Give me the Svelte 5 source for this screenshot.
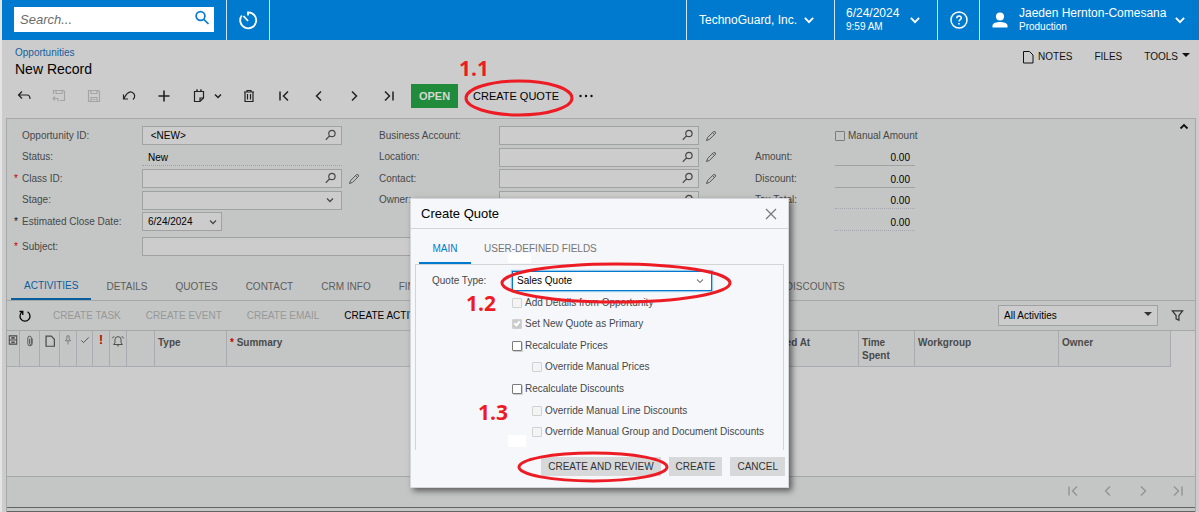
<script>
  let manual = $state(false);
  let rows = [
    { l: 'Opportunity ID', id: 'opp', type: 'search', value: ' <NEW>', l2: 'Business Account', id2: 'account', check: true },
    { l: 'Status', id: 'status', type: 'read', value: 'New', l2: 'Location', id2: 'location', l3: 'Amount', solid: true },
    { l: 'Class ID', id: 'class', star: 'red', type: 'search', value: '', edit: true, l2: 'Contact', id2: 'contact', l3: 'Discount', solid: true },
    { l: 'Stage', id: 'stage', type: 'select', value: '', l2: 'Owner', id2: 'owner', l3: 'Tax Total' },
    { l: 'Estimated Close Date', id: 'close', star: 'dark', type: 'select', short: true, value: '6/24/2024', total: true }
  ];
  let options = [
    { t: 'Add Details from Opportunity', disabled: true },
    { t: 'Set New Quote as Primary', disabled: true, checked: true },
    { t: 'Recalculate Prices' },
    { t: 'Override Manual Prices', disabled: true, sub: true },
    { t: 'Recalculate Discounts' },
    { t: 'Override Manual Line Discounts', disabled: true, sub: true },
    { t: 'Override Manual Group and Document Discounts', disabled: true, sub: true }
  ];
  const paths = {
    back: 'M6 3.5 2.5 7 6 10.5M2.5 7H11q3 0 3 4',
    saveback: 'M2.5 6V2.5h10l1 1v9H9M5 2.5v3h6v-3M2 10.5h5v3M4 8.5l-2 2 2 2',
    save: 'M2.5 2.5h10l1 1v10h-11zM5 2.5v3h6v-3M5 13.5v-4h6v4M6.500 11.500h3',
    undo: 'M2.500 6.500v4.500h4.500M2.800 10.700C5.500 5.500 8.500 3.200 11 4.200 14.300 5.500 14.500 9.500 12 11.500',
    plus: 'M8 2.500v11M2.500 8h11',
    clip: 'M3.500 3.500h9v6.500l-3.500 3.500h-5.500zM5 2.200h2M9 2.200h2M12.500 10H9v3.500',
    trash: 'M3 4h10M6 4V2.500h4V4M4 4v9.500h8V4M6.500 6v5.500M9.500 6v5.500',
    first: 'M4 3.500v9M12 3.500 7.500 8l4.500 4.500',
    prev: 'M10 3.500 5.500 8l4.500 4.500',
    next: 'M6 3.500 10.500 8 6 12.500',
    last: 'M12 3.500v9M4 3.500 8.500 8 4 12.500',
    down: 'M5 6.500l3 3 3-3',
    up: 'M4.500 9.500 8 6l3.500 3.500',
    find: 'M9.500 2.500a3.400 3.400 0 1 1 0 6.800a3.400 3.400 0 0 1 0-6.800M7 8.400 3 12.500',
    pencil: 'M2 14l1.500-4 8-8q3-.5 2.500 2.500l-8 8zM10 3.500l2.500 2.500',
    close: 'M3 3l10 10M13 3l-10 10',
    filter: 'M2.500 3h11L9.500 8v5l-3-1.500V8z',
    refresh: 'M5.500 3.800A5 5 0 1 0 10.500 3.800M5.800 7V3.500H2.500',
    page: 'M3.500 2.500h6l3.500 3.500v8h-9.500z',
    card: 'M3 2.500h10v11H3zM3 8h10M5.500 5.500h5M5.500 11h5M7 4v2M9 4v2M7 10v2M9 10v2',
    attach: 'M10.500 5v6a2.500 2.500 0 0 1-5 0V4.500a2 2 0 0 1 4 0V11a1 1 0 0 1-2 0V5.500',
    pin: 'M6.500 2.500h3v4l2 2.500h-7l2-2.500zM8 9v5',
    tick: 'M3 8.500l3 3L13 4.500',
    bell: 'M3 12h10l-1.500-2V6.500a3.500 3.500 0 0 0-7 0V10zM7 13.500h2M1.500 5l2-2.500M14.500 5l-2-2.500'
  };
</script>

{#snippet icon(name, size = 16, w = 1.2)}
  <svg class="ico" width={size} height={size} viewBox="0 0 16 16" fill="none" stroke="currentColor" stroke-width={w} aria-hidden="true"><path d={paths[name]} /></svg>
{/snippet}

<div class="page">
  <header>
    <div class="search">
      <input type="text" placeholder="Search..." aria-label="Search" />
      <svg width="16" height="16" viewBox="0 0 16 16" fill="none" stroke="#0b7bd0" stroke-width="1.7"><circle cx="6.500" cy="6" r="4.400" /><path d="M9.800 9.300 14.500 14" /></svg>
    </div>
    <button class="hcell timer" aria-label="Recent">
      <svg width="20" height="20" viewBox="0 0 20 20" fill="none" stroke="#fff" stroke-width="1.800"><path d="M10 5.500V2.300A8 8 0 1 1 3.800 5.500M10 11 5.500 6" /></svg>
    </button>
    <button class="hcell company">TechnoGuard, Inc. {@render icon('down', 22, 1.4)}</button>
    <button class="hcell date"><span class="two"><span>6/24/2024</span><small>9:59 AM</small></span>{@render icon('down', 22, 1.4)}</button>
    <button class="hcell help" aria-label="Help">
      <svg width="18" height="18" viewBox="0 0 18 18" fill="none" stroke="#fff" stroke-width="1.500"><circle cx="9" cy="9" r="8" /><path d="M6.700 7.300Q6.900 5 9 5t2.300 2C11.300 8.700 9 8.700 9 10.600M9 12v1.500" /></svg>
    </button>
    <button class="hcell user">
      <svg width="16" height="16" viewBox="0 0 16 16" fill="#fff"><circle cx="8" cy="4.500" r="4" /><path d="M.500 15.500v-2C.500 11 5 10 8 10s7.500 1 7.500 3.500v2z" /></svg>
      <span class="two"><span>Jaeden Hernton-Comesana</span><small>Production</small></span>
      {@render icon('down', 22, 1.4)}
    </button>
  </header>

  <div class="title">
    <div>
      <a href="#opportunities">Opportunities</a>
      <h1>New Record</h1>
    </div>
    <nav>
      <button>{@render icon('page', 16, 1)} NOTES</button>
      <button>FILES</button>
      <button>TOOLS <i class="caret"></i></button>
    </nav>
  </div>

  <div class="toolbar">
    <button aria-label="Back">{@render icon('back')}</button>
    <button class="off" aria-label="Save and close" disabled>{@render icon('saveback')}</button>
    <button class="off" aria-label="Save" disabled>{@render icon('save')}</button>
    <button aria-label="Undo">{@render icon('undo')}</button>
    <button aria-label="Add">{@render icon('plus', 16, 1.6)}</button>
    <button class="wide" aria-label="Clipboard">{@render icon('clip')}{@render icon('down', 16, 1.5)}</button>
    <button aria-label="Delete">{@render icon('trash')}</button>
    <button aria-label="First">{@render icon('first', 16, 1.5)}</button>
    <button aria-label="Previous">{@render icon('prev', 16, 1.5)}</button>
    <button aria-label="Next">{@render icon('next', 16, 1.5)}</button>
    <button aria-label="Last">{@render icon('last', 16, 1.5)}</button>
    <button class="open">OPEN</button>
    <div class="marked">
      <button class="quote">CREATE QUOTE</button>
      <svg class="ring r1" width="110" height="38" viewBox="0 0 110 38"><ellipse cx="55" cy="19" rx="53" ry="17" /></svg>
      <span class="step s1">1.1</span>
    </div>
    <button aria-label="More"><svg width="16" height="16" viewBox="0 0 16 16" fill="#111"><circle cx="2.500" cy="8" r="1.200" /><circle cx="8" cy="8" r="1.200" /><circle cx="13.500" cy="8" r="1.200" /></svg></button>
  </div>

  <main>
    <form>
      <div class="rows">
        {#each rows as r}
          <div class="row">
            <span class="star {r.star}">{r.star ? '*' : ''}</span>
            <label for={r.id}>{r.l}:</label>
            {#if r.type === 'read'}
              <output id={r.id} class="read">{r.value}</output>
            {:else if r.type === 'select'}
              <span class="field" class:short={r.short}>
                <select id={r.id}><option>{r.value}</option></select>{@render icon('down', 16, 1.3)}
              </span>
            {:else}
              <span class="field"><input id={r.id} type="text" value={r.value} />{@render icon('find', 15, 1.3)}</span>
            {/if}
            <span class="edit">{#if r.edit}{@render icon('pencil', 12, 1.2)}{/if}</span>
            {#if r.l2}
              <label for={r.id2}>{r.l2}:</label>
              <span class="field"><input id={r.id2} type="text" />{@render icon('find', 15, 1.3)}</span>
              <span class="edit">{#if r.id2 !== 'owner'}{@render icon('pencil', 12, 1.2)}{/if}</span>
            {:else}
              <span></span><span></span><span></span>
            {/if}
            <span>{r.l3 ? r.l3 + ':' : ''}</span>
            {#if r.check}
              <label class="check"><input type="checkbox" bind:checked={manual} />Manual Amount</label>
            {:else}
              <output class="num" class:solid={r.solid}>0.00</output>
            {/if}
          </div>
        {/each}
      </div>
      <div class="row subject">
        <span class="star red">*</span>
        <label for="subject">Subject:</label>
        <span class="field"><input id="subject" type="text" /></span>
      </div>
      <button type="button" class="collapse" aria-label="Collapse">{@render icon('up', 16, 1.800)}</button>
    </form>

    <div class="tabs">
      <button class="on">ACTIVITIES</button>
      <button>DETAILS</button>
      <button>QUOTES</button>
      <button>CONTACT</button>
      <button>CRM INFO</button>
      <button class="cut">FIN</button>
      <button class="far">DISCOUNTS</button>
    </div>

    <div class="gridbar">
      <button class="refresh" aria-label="Refresh">{@render icon('refresh', 16, 1.3)}</button>
      <button disabled>CREATE TASK</button>
      <button disabled>CREATE EVENT</button>
      <button disabled>CREATE EMAIL</button>
      <button>CREATE ACTIVITY</button>
      <span class="view">
        <select aria-label="View"><option>All Activities</option></select><i class="caret"></i>
      </span>
      <button class="filter" aria-label="Filter">{@render icon('filter', 15, 1.3)}</button>
    </div>

    <div class="grid">
      <table>
        <colgroup>
          <col style="width:13px" /><col style="width:20px" /><col style="width:20px" /><col style="width:17px" /><col style="width:16px" />
          <col style="width:17px" /><col style="width:17px" /><col style="width:28px" /><col style="width:72px" /><col />
          <col style="width:102px" /><col style="width:56px" /><col style="width:144px" /><col style="width:112px" />
        </colgroup>
        <thead>
          <tr>
            <th class="ic">{@render icon('card', 12, 1.4)}</th>
            <th class="ic">{@render icon('attach', 14, 1)}</th>
            <th class="ic">{@render icon('page', 14, 1.4)}</th>
            <th class="ic dim">{@render icon('pin', 12, 1.2)}</th>
            <th class="ic">{@render icon('tick', 12, 1.2)}</th>
            <th class="ic bang">!</th>
            <th class="ic">{@render icon('bell', 14, 1.1)}</th>
            <th></th>
            <th>Type</th>
            <th><b>*</b> Summary</th>
            <th>Created At</th>
            <th>Time Spent</th>
            <th>Workgroup</th>
            <th>Owner</th>
          </tr>
        </thead>
      </table>
    </div>

    <div class="pager">
      <button aria-label="First page">{@render icon('first', 16, 1.4)}</button>
      <button aria-label="Previous page">{@render icon('prev', 16, 1.4)}</button>
      <button aria-label="Next page">{@render icon('next', 16, 1.4)}</button>
      <button aria-label="Last page">{@render icon('last', 16, 1.4)}</button>
    </div>
    <div class="strip"></div>
  </main>

  <div class="overlay">
    <div class="dialog" role="dialog" aria-labelledby="dlg">
      <div class="dhead">
        <h2 id="dlg">Create Quote</h2>
        <button aria-label="Close">{@render icon('close', 16, 1.2)}</button>
      </div>
      <div class="dtabs">
        <i class="patch p1"></i>
        <button class="on">MAIN</button>
        <button>USER-DEFINED FIELDS</button>
      </div>
      <div class="dbody">
        <div class="qtype">
          <label for="qt">Quote Type:</label>
          <span class="field"><select id="qt"><option>Sales Quote</option></select>{@render icon('down', 16, 1.2)}</span>
        </div>
        <div class="opts">
          {#each options as o}
            <label class="check" class:sub={o.sub}><input type="checkbox" checked={o.checked} disabled={o.disabled} />{o.t}</label>
          {/each}
        </div>
        <svg class="ring r2" width="232" height="42" viewBox="0 0 232 42"><ellipse cx="116" cy="21" rx="114" ry="19" /></svg>
        <span class="step s2">1.2</span>
        <span class="step s3">1.3</span>
        <i class="patch p2"></i>
      </div>
      <div class="dfoot">
        <button>CREATE AND REVIEW</button>
        <button>CREATE</button>
        <button>CANCEL</button>
        <svg class="ring r3" width="152" height="32" viewBox="0 0 152 32"><ellipse cx="76" cy="16" rx="74" ry="14" /></svg>
      </div>
    </div>
  </div>
</div>

<style>
  :global(body) { margin: 0; background: #fff; }
  .page, .page :global(*) { box-sizing: border-box; }
  .page {
    position: relative; display: flex; flex-direction: column; min-height: 100vh;
    border-left: 2px solid #e4e4e4; background: #ccc; color: #484848;
    font: 10px/12px "Liberation Sans", Arial, sans-serif; overflow: hidden;
  }
  button { border: 0; padding: 0; background: none; color: inherit; font: inherit; white-space: nowrap; }
  input, select { font: inherit; color: #000; border-radius: 0; margin: 0; }
  h1, h2 { margin: 0; font-weight: 400; color: #000; }
  .ico { display: block; flex: none; }
  .caret { display: block; border: 4px solid transparent; border-top-color: currentColor; border-bottom: 0; }

  header { display: flex; height: 40px; background: #007acf; color: #fff; font-size: 12px; line-height: 14px; }
  .search { display: flex; align-items: center; width: 200px; height: 25px; margin: 7px 12px; padding: 0 4px 0 6px; background: #fff; }
  .search input { flex: 1; min-width: 0; border: 0; padding: 0; font-size: 13px; font-style: italic; outline: 0; background: none; }
  .search input::placeholder { color: #6c6c6c; opacity: 1; }
  .search svg { margin-bottom: 4px; }
  .hcell { display: flex; align-items: center; border-left: 1px solid #cfe5f6; }
  .timer { width: 44px; justify-content: center; border-right: 1px solid #cfe5f6; }
  .company { width: 148px; margin-left: auto; padding-left: 12px; justify-content: space-between; padding-right: 14px; }
  .date { width: 103px; padding: 0 11px; justify-content: space-between; }
  .help { width: 42px; justify-content: center; }
  .user { width: 220px; padding: 0 8px 0 12px; }
  .user .two { margin: 0 auto 0 11px; }
  .two { display: flex; flex-direction: column; text-align: left; }
  small { font-size: 10px; }

  .title { display: flex; justify-content: space-between; padding: 7px 9px 0 13px; height: 41px; }
  .title a { display: block; color: #13609c; text-decoration: none; }
  h1 { font-size: 14px; line-height: 20px; }
  .title nav { display: flex; gap: 22px; height: 20px; color: #111; }
  .title nav button { display: flex; align-items: center; gap: 2px; }
  .title nav .caret { margin-left: 2px; margin-bottom: 4px; }

  .toolbar { display: flex; align-items: center; height: 37px; padding: 0 5px 7px 4px; color: #222; font-size: 11px; }
  .toolbar > button { display: flex; align-items: center; justify-content: center; width: 35px; height: 24px; }
  .toolbar > .wide { width: 50px; gap: 3px; padding-left: 4px; }
  .toolbar .off { color: #a4a4a4; }
  .toolbar > .open { width: 47px; margin: 0 8px 0 5px; background: #1f8b3b; color: #d3d8d3; font-weight: 700; }
  .marked { position: relative; margin-right: 3px; }
  .quote { height: 24px; padding: 0 7px; color: #000; }

  .ring { position: absolute; fill: none; stroke: #ed1c24; stroke-width: 3; pointer-events: none; }
  .step { position: absolute; color: #ed1c24; font: 700 21px/22px "Open Sans", sans-serif; }
  .r1 { left: -2px; top: -5px; }
  .s1 { left: -7px; top: -27px; }

  main { display: flex; flex-direction: column; flex: 1; margin: 0 3px 0 4px; border: 1px solid #a6a7a7; border-bottom: 0; background: #c4c6c5; }
  form { position: relative; padding: 7px 0 15px 7px; }
  .rows { display: flex; flex-direction: column; justify-content: space-between; height: 105px; }
  .row { display: grid; grid-template-columns: 8px 120px 200px 37px 120px 200px 56px 80px 80px; align-items: center; height: 19px; }
  .star.red { color: #c00; }
  .star.dark { color: #111; }
  .field { position: relative; display: flex; align-items: center; justify-content: flex-end; height: 19px; padding-right: 3px; border: 1px solid #a0a1a1; background: #ccc; }
  .field input, .field select { position: absolute; inset: 0; width: 100%; height: 100%; padding: 0 5px; border: 0; appearance: none; background: none; outline: 0; }
  .field .ico, .field :global(svg) { position: relative; pointer-events: none; }
  .short { width: 80px; padding-right: 0; }
  .edit { padding-left: 6px; }
  .read { height: 18px; padding: 4px 6px 0; border-bottom: 1px dotted #a0a1a1; color: #000; }
  .num { height: 18px; padding: 4px 5px 0; border-bottom: 1px dotted #a6a7ae; color: #000; text-align: right; }
  .num.solid { border-bottom-style: solid; border-color: #a0a1a1; }
  .check { display: flex; align-items: center; gap: 3px; white-space: nowrap; }
  .check input { position: relative; width: 10px; height: 10px; flex: none; appearance: none; border: 1px solid #7b7b7b; border-radius: 1px; background: none; }
  .subject { margin-top: 6px; }
  .subject .field { grid-column: 3 / 7; }
  .collapse { position: absolute; right: 3px; top: 0; color: #111; }

  .tabs { display: flex; gap: 2px; height: 30px; padding-left: 4px; border-bottom: 1px solid #a6a7a7; color: #5c5c5c; }
  .tabs button { padding: 2px 13px 0; }
  .dtabs button { padding: 0 13px; }
  .tabs .on { color: #0a5e9e; border-bottom: 2px solid #0a5e9e; padding-top: 3px; }
  .tabs .cut { padding-right: 0; }
  .tabs .far { margin-left: 356px; }

  .gridbar { display: flex; align-items: center; gap: 25px; height: 30px; padding: 0 10px; border-bottom: 1px solid #a6a7a7; color: #000; }
  .gridbar button:disabled { color: #969898; }
  .gridbar .refresh { margin-right: -5px; }
  .view { position: relative; display: flex; align-items: center; justify-content: flex-end; width: 160px; height: 21px; margin-left: auto; padding: 0 5px 4px; border: 1px solid #a0a1a1; background: #ccc; color: #333; }
  .view select { position: absolute; inset: 0; width: 100%; height: 100%; padding: 0 5px; border: 0; appearance: none; background: none; }
  .gridbar .filter { margin-left: -13px; color: #333; }

  .grid { flex: 1; background: #ccc; }
  table { width: calc(100% - 24px); table-layout: fixed; border-collapse: separate; border-spacing: 0; }
  th { height: 36px; padding: 5px 3px 0; border: solid #a9abb0; border-width: 0 1px 1px 0; background: #c4c6c5; text-align: left; vertical-align: top; font-weight: 700; line-height: 13px; color: #4a4a4a; }
  th.ic { padding: 3px 0 0; }
  .ic .ico, .ic :global(svg) { margin: 0 auto; }
  .dim { color: #777; }
  th.bang { text-align: center; color: #b00; font-size: 12px; }
  b { color: #c00; }

  .pager { display: flex; justify-content: flex-end; gap: 19px; height: 31px; padding: 6px 9px 0; border-top: 1px solid #a6a7a7; color: #929393; }
  .pager button { height: 16px; }
  .strip { height: 5px; border: solid #626363; border-width: 1px 0; background: #c4c6c5; }

  .overlay { position: absolute; inset: 198px 0 auto -2px; display: flex; justify-content: center; pointer-events: none; }
  .dialog { width: 379px; border: 1px solid #d5d6d8; background: #f5f7fa; box-shadow: 3px 3px 6px #0008; pointer-events: auto; }
  .dhead { display: flex; align-items: center; justify-content: space-between; height: 30px; padding: 0 9px 0 10px; border-bottom: 1px solid #d3d4d6; color: #777; }
  h2 { font-size: 13px; line-height: 16px; }
  .dtabs { position: relative; display: flex; height: 35px; padding: 5px 8px 0; color: #757575; }
  .dtabs button { position: relative; }
  .dtabs .on { width: 52px; border-bottom: 2px solid #007acf; padding: 2px 0 0; color: #007acf; }
  .dbody { position: relative; margin: 0 4px; padding: 5px 0 7px; border: 1px solid #d3d4d6; border-bottom: 0; }
  .qtype { display: grid; grid-template-columns: 80px 200px; align-items: center; height: 22px; padding-left: 16px; }
  .qtype .field { height: 20px; border-color: #007acf; background: #fff; color: #888; box-shadow: 0 0 1px 1px #9bc9ea; }
  .qtype .field select { padding-left: 4px; }
  .opts { display: grid; grid-auto-rows: 1fr; height: 151px; padding-left: 96px; }
  .sub { padding-left: 20px; }
  .opts input { background: #fff; box-shadow: 1px 1px #ccc; }
  .opts input:disabled { border-color: #d0d2d2; background: #f3f4f3; box-shadow: none; }
  .opts input:checked { background: #c9cbcb; }
  .opts input:checked::after { content: ""; position: absolute; left: 2px; top: 0; width: 2px; height: 4px; border: solid #fff; border-width: 0 2px 2px 0; transform: rotate(40deg); }
  .dfoot { position: relative; display: flex; justify-content: flex-end; gap: 8px; padding: 7px 3px 11px; }
  .dfoot button { height: 19px; padding: 0 7px; background: #d6d8da; color: #333; }
  .r2 { left: 84px; top: -3px; }
  .s2 { left: 50px; top: 27px; }
  .r3 { left: 106px; top: 1px; }
  .s3 { left: 62px; top: 136px; }
  .patch { position: absolute; background: #fff; }
  .p1 { left: 97px; top: 24px; width: 23px; height: 10px; }
  .p2 { left: 92px; top: 170px; width: 18px; height: 12px; }
</style>
